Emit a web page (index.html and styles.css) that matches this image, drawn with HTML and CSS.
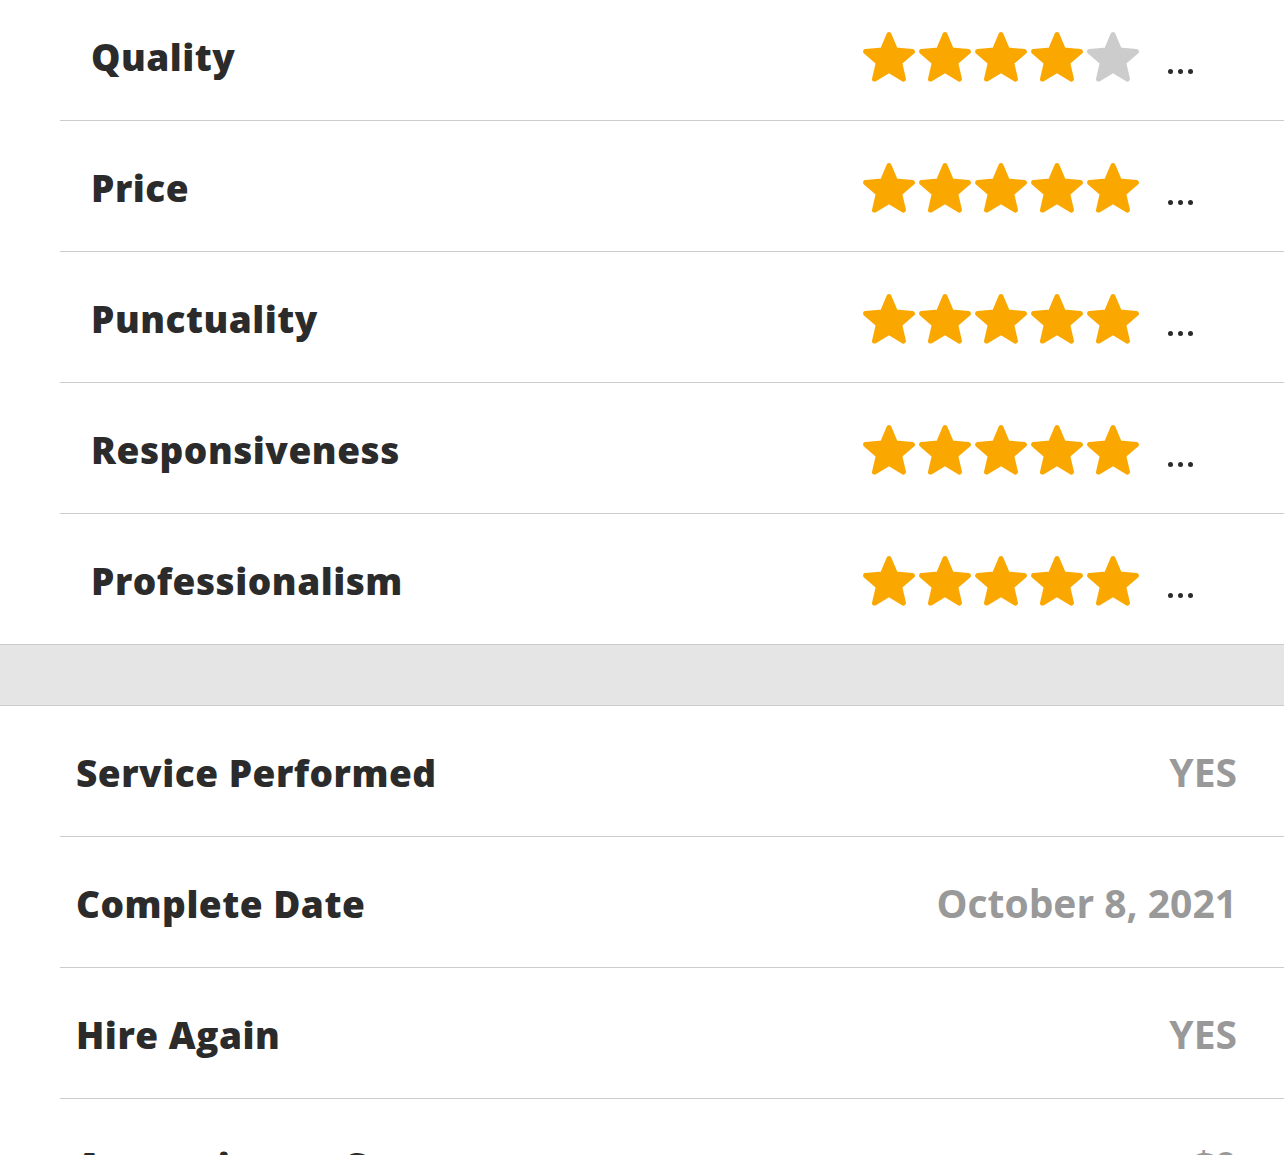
FILE: index.html
```html
<!DOCTYPE html>
<html>
<head>
<meta charset="utf-8">
<link rel="stylesheet" href="styles.css">
</head>
<body>
<svg width="0" height="0" class="defs">
  <defs>
    <path id="star" d="M12 17.27L18.18 21l-1.64-7.03L22 9.24l-7.19-.61L12 2 9.19 8.63 2 9.24l5.46 4.73L5.82 21z"/>
  </defs>
</svg>
<div class="page">
  <section class="ratings">
    <div class="rrow">
      <span class="label">Quality</span>
      <div class="right">
        <div class="stars">
          <svg class="star on" viewBox="0 0 24 24"><use href="#star"/></svg>
          <svg class="star on" viewBox="0 0 24 24"><use href="#star"/></svg>
          <svg class="star on" viewBox="0 0 24 24"><use href="#star"/></svg>
          <svg class="star on" viewBox="0 0 24 24"><use href="#star"/></svg>
          <svg class="star off" viewBox="0 0 24 24"><use href="#star"/></svg>
        </div>
        <div class="dots"><i></i><i></i><i></i></div>
      </div>
    </div>
    <div class="rrow">
      <span class="label">Price</span>
      <div class="right">
        <div class="stars">
          <svg class="star on" viewBox="0 0 24 24"><use href="#star"/></svg>
          <svg class="star on" viewBox="0 0 24 24"><use href="#star"/></svg>
          <svg class="star on" viewBox="0 0 24 24"><use href="#star"/></svg>
          <svg class="star on" viewBox="0 0 24 24"><use href="#star"/></svg>
          <svg class="star on" viewBox="0 0 24 24"><use href="#star"/></svg>
        </div>
        <div class="dots"><i></i><i></i><i></i></div>
      </div>
    </div>
    <div class="rrow">
      <span class="label">Punctuality</span>
      <div class="right">
        <div class="stars">
          <svg class="star on" viewBox="0 0 24 24"><use href="#star"/></svg>
          <svg class="star on" viewBox="0 0 24 24"><use href="#star"/></svg>
          <svg class="star on" viewBox="0 0 24 24"><use href="#star"/></svg>
          <svg class="star on" viewBox="0 0 24 24"><use href="#star"/></svg>
          <svg class="star on" viewBox="0 0 24 24"><use href="#star"/></svg>
        </div>
        <div class="dots"><i></i><i></i><i></i></div>
      </div>
    </div>
    <div class="rrow">
      <span class="label">Responsiveness</span>
      <div class="right">
        <div class="stars">
          <svg class="star on" viewBox="0 0 24 24"><use href="#star"/></svg>
          <svg class="star on" viewBox="0 0 24 24"><use href="#star"/></svg>
          <svg class="star on" viewBox="0 0 24 24"><use href="#star"/></svg>
          <svg class="star on" viewBox="0 0 24 24"><use href="#star"/></svg>
          <svg class="star on" viewBox="0 0 24 24"><use href="#star"/></svg>
        </div>
        <div class="dots"><i></i><i></i><i></i></div>
      </div>
    </div>
    <div class="rrow">
      <span class="label">Professionalism</span>
      <div class="right">
        <div class="stars">
          <svg class="star on" viewBox="0 0 24 24"><use href="#star"/></svg>
          <svg class="star on" viewBox="0 0 24 24"><use href="#star"/></svg>
          <svg class="star on" viewBox="0 0 24 24"><use href="#star"/></svg>
          <svg class="star on" viewBox="0 0 24 24"><use href="#star"/></svg>
          <svg class="star on" viewBox="0 0 24 24"><use href="#star"/></svg>
        </div>
        <div class="dots"><i></i><i></i><i></i></div>
      </div>
    </div>
  </section>
  <div class="band"></div>
  <section class="details">
    <div class="drow"><span class="label">Service Performed</span><span class="value">YES</span></div>
    <div class="drow"><span class="label">Complete Date</span><span class="value">October 8, 2021</span></div>
    <div class="drow"><span class="label">Hire Again</span><span class="value">YES</span></div>
    <div class="drow"><span class="label">Approximate Cost</span><span class="value">$0</span></div>
  </section>
</div>
</body>
</html>
```
FILE: styles.css
```css
html, body {
  margin: 0;
  padding: 0;
  background: #ffffff;
}
body {
  font-family: "Open Sans", "Liberation Sans", sans-serif;
  color: #2b2b2b;
  overflow: hidden;
}
.defs {
  position: absolute;
  width: 0;
  height: 0;
}
.page {
  margin-top: -10px;
}
.ratings {
  padding-left: 60px;
}
.rrow {
  height: 130px;
  border-bottom: 1px solid #cccccc;
  display: flex;
  align-items: center;
  justify-content: space-between;
  padding-left: 31px;
  padding-right: 91px;
}
.rrow:last-child {
  border-bottom: none;
}
.label {
  font-size: 37px;
  font-weight: 800;
  line-height: 1.2;
  letter-spacing: 0.5px;
  padding-top: 5px;
}
.right {
  display: flex;
  align-items: center;
}
.stars {
  display: flex;
  padding-top: 6px;
}
.star {
  width: 56px;
  height: 56px;
  display: block;
}
.star.on {
  fill: #faa700;
  stroke: #faa700;
}
.star.off {
  fill: #cccccc;
  stroke: #cccccc;
}
.star use {
  stroke-width: 2.2;
  stroke-linejoin: round;
}
.dots {
  display: flex;
  gap: 5px;
  margin-left: 27px;
  padding-top: 32px;
}
.dots i {
  width: 5px;
  height: 5px;
  border-radius: 50%;
  background: #2b2b2b;
}
.band {
  height: 60px;
  background: #e5e5e5;
  border-top: 1px solid #cccccc;
  border-bottom: 1px solid #cccccc;
}
.details {
  padding-left: 60px;
}
.drow {
  height: 130px;
  border-bottom: 1px solid #cccccc;
  display: flex;
  align-items: center;
  justify-content: space-between;
  padding-left: 16px;
  padding-right: 47px;
}
.value {
  font-size: 39px;
  font-weight: 700;
  color: #999999;
  line-height: 1.2;
  letter-spacing: 0;
  padding-top: 2px;
}
```
